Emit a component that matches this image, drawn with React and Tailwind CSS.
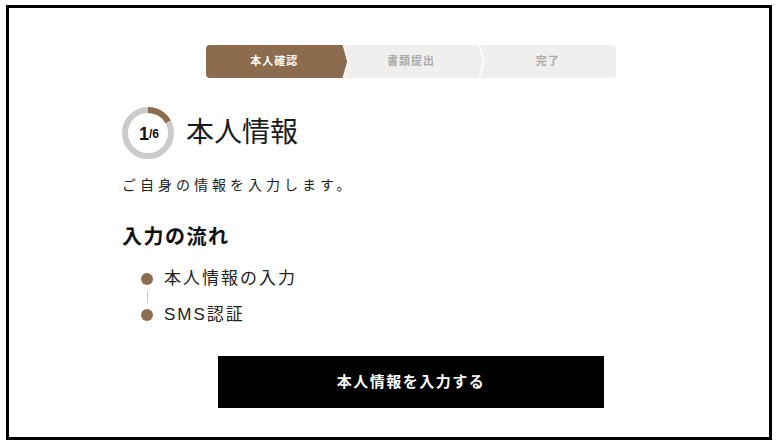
const font = { fontFamily: '"Liberation Sans", "Noto Sans CJK JP", sans-serif' };

const Chevron = ({ filled }) => (
  <div className="relative w-0">
    <svg className="absolute left-0 top-0 h-[33px] w-[8px] overflow-visible" viewBox="0 0 8 33">
      {filled && <polygon points="0,0 5,16.5 0,33" fill="#8c6b4f" />}
      <polyline points="0,-1 5,16.5 0,34" fill="none" stroke="#ffffff" strokeWidth="1.5" />
    </svg>
  </div>
);

const Stepper = () => (
  <div className="mx-auto flex h-[33px] w-[410px] overflow-hidden rounded-[4px] bg-[#f0efed] text-[11px] font-bold tracking-[1px]">
    <div className="flex flex-1 items-center justify-center bg-[#8c6b4f] text-white">本人確認</div>
    <Chevron filled />
    <div className="flex flex-1 items-center justify-center text-[#a9a9a9]">書類提出</div>
    <Chevron />
    <div className="flex flex-1 items-center justify-center text-[#a9a9a9]">完了</div>
  </div>
);

const Progress = () => (
  <div className="relative h-[52px] w-[52px]">
    <svg className="h-[52px] w-[52px] -rotate-90" viewBox="0 0 52 52">
      <circle cx="26" cy="26" r="23" fill="none" stroke="#cbcbcb" strokeWidth="6" />
      <circle cx="26" cy="26" r="23" fill="none" stroke="#8c6b4f" strokeWidth="6" strokeDasharray="24.1 200" />
    </svg>
    <div className="absolute inset-0 flex items-center justify-center pl-[2px] pt-[1px] font-bold text-[#111]">
      <span className="text-[18px] leading-none">1</span>
      <span className="text-[12px] leading-none">/6</span>
    </div>
  </div>
);

const FlowItem = ({ children }) => (
  <div className="flex h-[24px] items-center">
    <span className="ml-[19px] h-[12px] w-[12px] rounded-full bg-[#8b6d50]" />
    <span className="ml-[11px] text-[17px] tracking-[2px] text-[#222]">{children}</span>
  </div>
);

export default function App() {
  return (
    <div className="flex h-[444px] w-[779px] bg-white pb-[4px] pl-[6px] pr-[7px] pt-[5px]" style={font}>
      <div className="flex-1 border-[3px] border-black pl-[113px] pr-[69px] pt-[37px]">
        <Stepper />

        <div className="mt-[29px] flex items-center">
          <Progress />
          <h1 className="ml-[12px] text-[28px] leading-none text-[#1a1a1a]">本人情報</h1>
        </div>

        <p className="mt-[16px] text-[14px] leading-[20px] tracking-[4px] text-[#222]">ご自身の情報を入力します。</p>

        <h2 className="mt-[29px] text-[20px] font-bold leading-[26px] tracking-[1.5px] text-[#111]">入力の流れ</h2>

        <div className="mt-[17px] flex flex-col">
          <FlowItem>本人情報の入力</FlowItem>
          <div className="ml-[25px] h-[12px] w-px bg-[#c8c8c8]" />
          <FlowItem>SMS認証</FlowItem>
        </div>

        <button className="mx-auto mt-[29px] flex h-[52px] w-[386px] items-center justify-center bg-black text-[15px] font-bold tracking-[1.5px] text-white">
          本人情報を入力する
        </button>
      </div>
    </div>
  );
}
